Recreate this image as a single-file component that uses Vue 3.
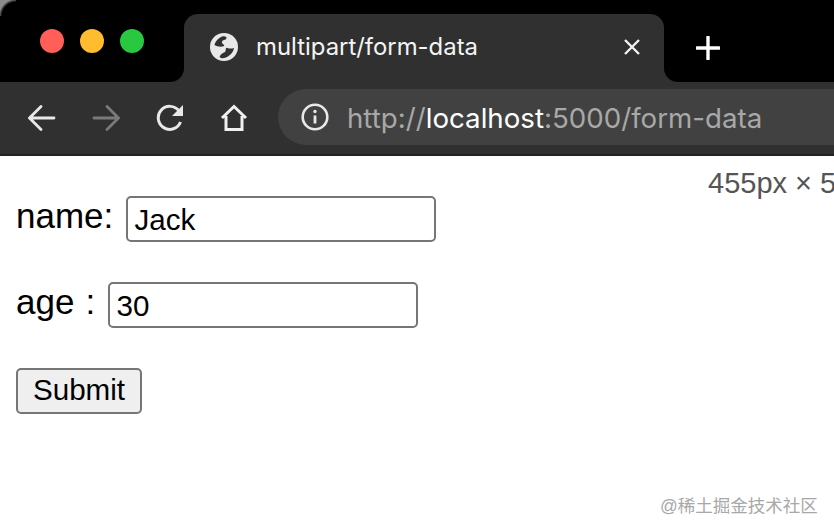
<script setup>
import { ref } from 'vue'

const name = ref('Jack')
const age = ref('30')
</script>

<template>
  <div class="page">
    <header class="chrome">
      <div class="tabstrip">
        <div class="strip-left">
          <span class="light red"></span>
          <span class="light yellow"></span>
          <span class="light green"></span>
        </div>
        <div class="tab-slot">
          <div class="tab">
            <svg class="globe" viewBox="0 0 28 28" width="28" height="28">
              <circle cx="14" cy="14" r="14" fill="#e8e8e8" />
              <path d="M4.500 12C5.500 8 9 4.500 13 3.300c2.500-.3 4.300.7 3.200 2.700-1.700 1.200-4.200 1.200-4.200 3.200 0 2 2.500 2 2.200 3.800-3.500 1.300-7 .6-9.700-1Z" fill="#303030" />
              <path d="M9.500 24c1-3 3.500-4 5.500-5 1.200-1.500.2-4 2-4.300 2 1 4.300 1.300 7 .3-.7 4.500-5 9.500-11 10.200-1.300 0-2.700-.3-3.500-1.200Z" fill="#303030" />
            </svg>
            <span class="tab-title">multipart/form-data</span>
            <svg class="tab-close" viewBox="0 0 18 18" width="18" height="18">
              <path d="M2 2l14 14M16 2L2 16" stroke="#f2f2f2" stroke-width="2.400" fill="none" />
            </svg>
          </div>
        </div>
        <div class="strip-right">
          <svg viewBox="0 0 24 24" width="24" height="24">
            <path d="M12 1v22M1 12h22" stroke="#fff" stroke-width="3.400" stroke-linecap="round" fill="none" />
          </svg>
        </div>
      </div>

      <div class="toolbar">
        <svg class="nav" viewBox="0 0 28 28" width="28" height="28">
          <path d="M26 14H2.500M13 2.500L1.500 14 13 25.500" stroke="#e8e8e8" stroke-width="2.800" stroke-linecap="round" fill="none" />
        </svg>
        <svg class="nav" viewBox="0 0 28 28" width="28" height="28">
          <path d="M2 14h23.500M15 2.500L26.500 14 15 25.500" stroke="#7a7a7a" stroke-width="2.800" stroke-linecap="round" fill="none" />
        </svg>
        <svg class="nav" viewBox="0 0 28 28" width="28" height="28">
          <path d="M24.500 18a11.500 11.500 0 1 1-1.500-11" stroke="#e8e8e8" stroke-width="3" fill="none" />
          <path d="M27 1v11H16Z" fill="#e8e8e8" />
        </svg>
        <svg class="nav" viewBox="0 0 28 28" width="28" height="28">
          <path d="M2 14L14 2.500 26 14M6 12v13.500h16V12" stroke="#f0f0f0" stroke-width="3" fill="none" />
        </svg>
        <div class="omnibox">
          <svg viewBox="0 0 28 28" width="28" height="28">
            <circle cx="14" cy="14" r="12.300" stroke="#e8e8e8" stroke-width="2.600" fill="none" />
            <path d="M14 12.500v8" stroke="#e8e8e8" stroke-width="2.800" />
            <circle cx="14" cy="8.500" r="1.700" fill="#e8e8e8" />
          </svg>
          <span class="url">http://<b>localhost</b>:5000/form-data</span>
        </div>
      </div>
    </header>

    <main class="content">
      <form class="form" @submit.prevent>
        <div class="row">
          <label for="f-name">name:</label>
          <input id="f-name" v-model="name" type="text" class="field" />
        </div>
        <div class="row">
          <label for="f-age">age :</label>
          <input id="f-age" v-model="age" type="text" class="field" />
        </div>
        <div class="row">
          <button type="submit" class="submit">Submit</button>
        </div>
      </form>

      <!-- devtools size hint, cut off by the window edge -->
      <span class="size-hint">455px × 5</span>
      <span class="watermark">@稀土掘金技术社区</span>
    </main>
  </div>
</template>

<style>
html, body {
  margin: 0;
  overflow: hidden;
  background: #fff;
}
</style>

<style scoped>
.page {
  width: 834px;
  height: 532px;
  display: flex;
  flex-direction: column;
  overflow: hidden;
  font-family: "Liberation Sans", Arial, sans-serif;
}
.chrome {
  background: #303030;
  flex: none;
}
.tabstrip {
  height: 82px;
  display: flex;
}
.strip-left {
  position: relative;
  width: 184px;
  background: #000;
  border-bottom-right-radius: 14px;
  display: flex;
  align-items: flex-start;
  gap: 16px;
  padding: 29px 0 0 40px;
  box-sizing: border-box;
}
/* window corner peeking through at the top left */
.strip-left::before {
  content: "";
  position: absolute;
  left: 0;
  top: 0;
  width: 16px;
  height: 16px;
  background: radial-gradient(circle at 100% 100%, transparent 14px, #8c8c8c 17px);
}
.light {
  width: 24px;
  height: 24px;
  border-radius: 50%;
}
.red { background: #ff5f57; }
.yellow { background: #febc2e; }
.green { background: #28c840; }
.tab-slot {
  width: 480px;
  background: #000;
  padding-top: 14px;
  box-sizing: border-box;
}
.tab {
  height: 68px;
  background: #303030;
  border-radius: 14px 14px 0 0;
  display: flex;
  align-items: center;
  padding: 0 23px 0 26px;
  box-sizing: border-box;
}
.globe {
  margin-top: -2px;
}
.tab-title {
  margin-left: 18px;
  flex: 1;
  font-family: Inter, "Liberation Sans", sans-serif;
  font-size: 23.900px;
  color: #f4f4f4;
  margin-top: -4px;
}
.tab-close {
  margin-top: -2px;
}
.strip-right {
  flex: 1;
  background: #000;
  border-bottom-left-radius: 14px;
  display: flex;
  align-items: flex-start;
  padding: 36px 0 0 32px;
}
.toolbar {
  height: 74px;
  display: flex;
  align-items: center;
  padding-left: 28px;
  gap: 36px;
  box-sizing: border-box;
  border-bottom: 2px solid #222;
}
.nav {
  flex: none;
}
.omnibox {
  flex: 1;
  height: 56px;
  margin-left: -6px;
  margin-bottom: 2px;
  background: #414141;
  border-radius: 28px 0 0 28px;
  display: flex;
  align-items: center;
  gap: 18px;
  padding-left: 23px;
}
.url {
  font-family: Inter, "Liberation Sans", sans-serif;
  font-size: 27.700px;
  color: #a8a8a8;
  white-space: nowrap;
  margin-top: 2px;
}
.url b {
  font-weight: 400;
  color: #fff;
}
.content {
  flex: 1;
  position: relative;
  background: #fff;
  padding: 40px 0 0 16px;
}
.form {
  display: flex;
  flex-direction: column;
  gap: 40px;
}
.row {
  display: flex;
  align-items: center;
  gap: 12.700px;
  height: 46px;
}
.row label {
  font-size: 35px;
  word-spacing: 1.500px;
  color: #000;
  margin-top: -6px;
}
.field {
  width: 310px;
  height: 46px;
  box-sizing: border-box;
  border: 2px solid #767676;
  border-radius: 5px;
  padding: 2px 6px 0 6.500px;
  font-family: "Liberation Sans", Arial, sans-serif;
  font-size: 29.600px;
  color: #000;
  background: #fff;
  outline: none;
}
.submit {
  width: 126px;
  height: 46px;
  box-sizing: border-box;
  border: 2px solid #767676;
  border-radius: 5px;
  background: #efefef;
  font-family: "Liberation Sans", Arial, sans-serif;
  font-size: 29.600px;
  color: #000;
  padding: 0 0 2px;
}
.size-hint {
  position: absolute;
  left: 708px;
  top: 11px;
  font-family: "Liberation Sans", Arial, sans-serif;
  font-size: 29px;
  color: #555;
  white-space: nowrap;
}
.watermark {
  position: absolute;
  left: 660px;
  top: 336px;
  font-family: "Liberation Sans", "Noto Sans CJK SC", sans-serif;
  font-size: 17.500px;
  color: #a8a8a8;
  white-space: nowrap;
}
</style>
